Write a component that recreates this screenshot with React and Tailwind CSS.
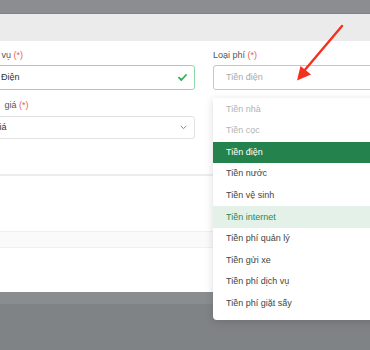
import React from 'react';

const options = [
	{ label: 'Tiền nhà', state: 'disabled' },
	{ label: 'Tiền cọc', state: 'disabled' },
	{ label: 'Tiền điện', state: 'selected' },
	{ label: 'Tiền nước' },
	{ label: 'Tiền vệ sinh' },
	{ label: 'Tiền internet', state: 'hover' },
	{ label: 'Tiền phí quản lý' },
	{ label: 'Tiền gửi xe' },
	{ label: 'Tiền phí dịch vụ' },
	{ label: 'Tiền phí giặt sấy' },
];

function Label({ children, className = '' }) {
	return (
		<div className={`text-[9px] leading-[11px] text-[#555] whitespace-nowrap ${className}`}>
			{children} <span className="text-[#ec5a5a]">(*)</span>
		</div>
	);
}

export default function App() {
	return (
		<div className="relative w-[370px] h-[350px] overflow-hidden bg-[#808386] font-['Liberation_Sans',Arial,sans-serif]">
			{/* backdrop above modal */}
			<div className="h-[14px] bg-[#8b8e90] border-b border-[#7f8284]" />

			{/* modal */}
			<div className="h-[278px] bg-white flex flex-col">
				<div className="h-[27px] bg-[#ebebeb]" />

				{/* form */}
				<div className="h-[133px] pt-[9px] flex gap-[18px] -ml-[13px]">
					<div className="w-[208px] shrink-0">
						<Label className="-ml-[6px]">Dịch vụ</Label>
						<div className="mt-[4px] h-[25px] border border-[#8edaa7] rounded-[3px] flex items-center justify-between pl-[13px] pr-[7px]">
							<span className="text-[9px] text-[#333]">Điện</span>
							<svg width="9" height="7" viewBox="0 0 9 7" fill="none">
								<path d="M1 3.6L3.4 6L8 1" stroke="#2bb24c" strokeWidth="1.8" strokeLinecap="round" strokeLinejoin="round" />
							</svg>
						</div>
						<Label className="mt-[10px] -ml-[5px]">{'Đơn\u00a0\u00a0giá'}</Label>
						<div className="mt-[5px] h-[23px] border border-[#e2e2e2] rounded-[3px] flex items-center justify-between pl-[13px] pr-[7px] overflow-hidden">
							<span className="text-[9px] text-[#333] whitespace-nowrap -ml-[30px]">Bảng giá</span>
							<svg width="7" height="5" viewBox="0 0 7 5" fill="none">
								<path d="M1 1.2L3.5 3.6L6 1.2" stroke="#888" strokeWidth="1" strokeLinecap="round" strokeLinejoin="round" />
							</svg>
						</div>
					</div>
					<div className="w-[200px] shrink-0">
						<Label>Loại phí</Label>
						<div className="mt-[4px] h-[25px] border border-[#a9d8b9] rounded-[3px] flex items-center pl-[12px]">
							<span className="text-[9px] text-[#aaa]">Tiền điện</span>
						</div>
					</div>
				</div>

				<div className="border-t-2 border-[#ececec] h-[57px]" />
				<div className="h-[17px] bg-[#fafafa] border-t border-b border-[#f0f0f0]" />
				<div className="flex-1" />
			</div>
			<div className="h-[12px] bg-[#8a8d90]" />

			{/* dropdown menu */}
			<div className="absolute left-[213px] top-[98px] w-[170px] h-[222px] bg-white rounded-bl-[4px] shadow-[0_2px_8px_rgba(0,0,0,0.15)] pt-[0.5px]">
				{options.map((o) => {
					let cls = 'text-[#444]';
					if (o.state === 'disabled') cls = 'text-[#b3b3b3]';
					if (o.state === 'selected') cls = 'bg-[#24834d] text-white';
					if (o.state === 'hover') cls = 'bg-[#e4f1e8] text-[#2b8a4c]';
					return (
						<div key={o.label} className={`h-[21.6px] flex items-center pl-[13px] text-[9px] whitespace-nowrap ${cls}`}>
							{o.label}
						</div>
					);
				})}
			</div>

			{/* annotation arrow */}
			<svg className="absolute left-0 top-0" width="370" height="350" viewBox="0 0 370 350">
				<line x1="342" y1="26" x2="304" y2="71" stroke="#f4311f" strokeWidth="2.4" strokeLinecap="round" />
				<polygon points="300.5,66 311,74.5 297,80.5" fill="#f4311f" />
			</svg>
		</div>
	);
}
